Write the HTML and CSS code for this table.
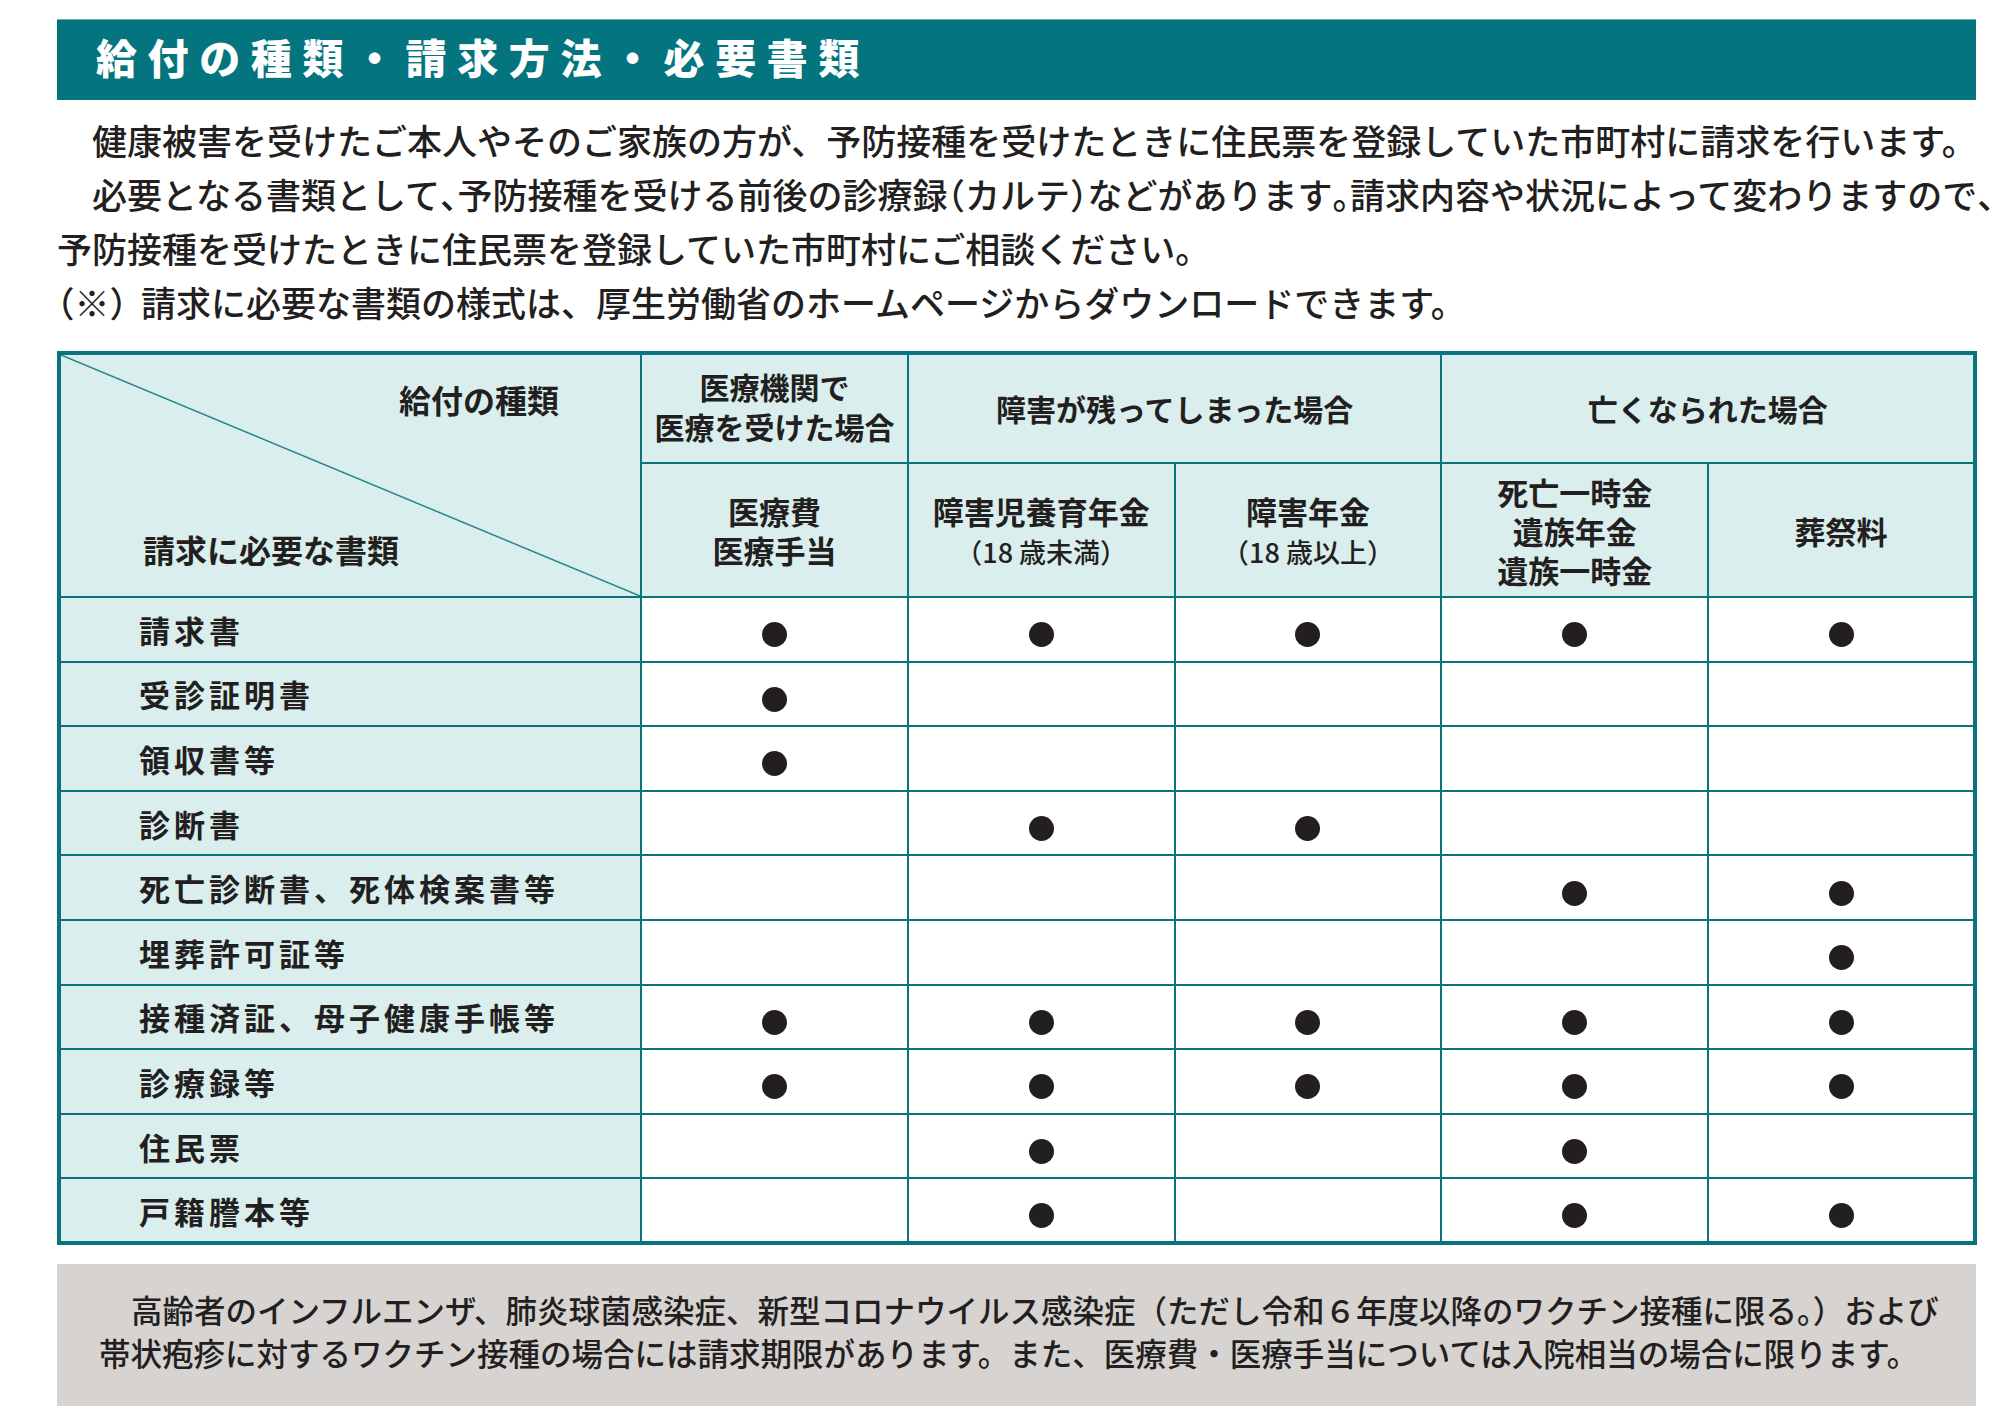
FILE: index.html
```html
<!DOCTYPE html>
<html lang="ja">
<head>
<meta charset="utf-8">
<title>給付の種類・請求方法・必要書類</title>
<link rel="stylesheet" href="styles.css">
</head>
<body>
<main class="page">
  <h1 class="title">給付の種類・請求方法・必要書類</h1>
  <div class="intro">
    <p class="ind">健康被害を受けたご本人やそのご家族の方が、予防接種を受けたときに住民票を登録していた市町村に請求を行います。</p>
    <p class="ind">必要となる書類として<span class="h">、</span>予防接種を受ける前後の診療録<span class="h">（</span>カルテ<span class="h">）</span>などがあります<span class="h">。</span>請求内容や状況によって変わりますので<span class="h">、</span><br>予防接種を受けたときに住民票を登録していた市町村にご相談ください。</p>
    <p><span class="h">（</span>※<span class="h">）</span><span class="gap"></span>請求に必要な書類の様式は、厚生労働省のホームページからダウンロードできます。</p>
  </div>

  <table class="grid">
    <colgroup>
      <col class="c-label">
      <col class="c-data"><col class="c-data"><col class="c-data"><col class="c-data"><col class="c-data">
    </colgroup>
    <thead>
      <tr class="hr1">
        <th class="corner" rowspan="2">
          <div class="corner-in">
            <span class="corner-top">給付の種類</span>
            <span class="corner-bottom">請求に必要な書類</span>
          </div>
        </th>
        <th class="two">医療機関で<br>医療を受けた場合</th>
        <th colspan="2">障害が残ってしまった場合</th>
        <th colspan="2">亡くなられた場合</th>
      </tr>
      <tr class="hr2">
        <th>医療費<br>医療手当</th>
        <th>障害児養育年金<br><span class="sub">（18 歳未満）</span></th>
        <th>障害年金<br><span class="sub">（18 歳以上）</span></th>
        <th>死亡一時金<br>遺族年金<br>遺族一時金</th>
        <th>葬祭料</th>
      </tr>
    </thead>
    <tbody>
      <tr><td class="label">請求書</td><td><i class="dot"></i></td><td><i class="dot"></i></td><td><i class="dot"></i></td><td><i class="dot"></i></td><td><i class="dot"></i></td></tr>
      <tr><td class="label">受診証明書</td><td><i class="dot"></i></td><td></td><td></td><td></td><td></td></tr>
      <tr><td class="label">領収書等</td><td><i class="dot"></i></td><td></td><td></td><td></td><td></td></tr>
      <tr><td class="label">診断書</td><td></td><td><i class="dot"></i></td><td><i class="dot"></i></td><td></td><td></td></tr>
      <tr><td class="label">死亡診断書、死体検案書等</td><td></td><td></td><td></td><td><i class="dot"></i></td><td><i class="dot"></i></td></tr>
      <tr><td class="label">埋葬許可証等</td><td></td><td></td><td></td><td></td><td><i class="dot"></i></td></tr>
      <tr><td class="label">接種済証、母子健康手帳等</td><td><i class="dot"></i></td><td><i class="dot"></i></td><td><i class="dot"></i></td><td><i class="dot"></i></td><td><i class="dot"></i></td></tr>
      <tr><td class="label">診療録等</td><td><i class="dot"></i></td><td><i class="dot"></i></td><td><i class="dot"></i></td><td><i class="dot"></i></td><td><i class="dot"></i></td></tr>
      <tr><td class="label">住民票</td><td></td><td><i class="dot"></i></td><td></td><td><i class="dot"></i></td><td></td></tr>
      <tr><td class="label">戸籍謄本等</td><td></td><td><i class="dot"></i></td><td></td><td><i class="dot"></i></td><td><i class="dot"></i></td></tr>
    </tbody>
  </table>

  <div class="note">
    <p class="ind">高齢者のインフルエンザ、肺炎球菌感染症、新型コロナウイルス感染症（ただし令和６年度以降のワクチン接種に限る。）および<br>帯状疱疹に対するワクチン接種の場合には請求期限があります。また、医療費・医療手当については入院相当の場合に限ります。</p>
  </div>
</main>
</body>
</html>
```

FILE: styles.css
```css
* { box-sizing: border-box; }
html, body { margin: 0; background: #fff; }
body {
  font-family: "Noto Sans CJK JP", "Noto Sans", sans-serif;
  color: #231f20;
}
.page {
  width: 2000px;
  padding: 19px 24px 0 57px;
}
.title {
  margin: 0;
  height: 81px;
  background: #04747e;
  border-top: 1px solid #6aaeb4;
  color: #fff;
  font-size: 41px;
  font-weight: 900;
  letter-spacing: 10.6px;
  line-height: 73px;
  padding-left: 39px;
  white-space: nowrap;
}
.intro {
  margin-top: 13px;
  font-size: 35px;
  line-height: 54px;
  font-weight: 500;
  white-space: nowrap;
}
.intro p { margin: 0; }
.ind { text-indent: 35px; }
.h { font-feature-settings: "halt"; }
.gap { display: inline-block; width: 14px; }

.grid {
  margin-top: 22px;
  width: 1916px;
  border-collapse: collapse;
  table-layout: fixed;
  border: 4px solid #0a737d;
}
.c-label { width: 582px; }
.c-data { width: 266.8px; }
.grid th, .grid td {
  border: 2px solid #0a737d;
  padding: 0;
}
.grid th {
  background: #d9eeed;
  font-size: 30px;
  font-weight: 700;
  line-height: 39px;
  text-align: center;
  vertical-align: middle;
}
.grid th.two { padding-bottom: 6px; line-height: 40px; }
.hr1 { height: 110px; }
.hr2 { height: 134px; }
.hr2 th { font-size: 31px; line-height: 39px; }
.sub {
  font-size: 27px;
  font-weight: 500;
  line-height: 30px;
}
.corner {
  background: linear-gradient(to top right, transparent calc(50% - 1.3px), #0a737d 50%, transparent calc(50% + 1.3px)) #d9eeed !important;
}
.corner-in {
  height: 240px;
  display: flex;
  flex-direction: column;
  justify-content: space-between;
  padding: 23px 81px 27px 82px;
  font-size: 32px;
  line-height: 40px;
  text-align: left;
}
.corner-top { align-self: flex-end; }
.corner-bottom { align-self: flex-start; }

.grid tbody tr { height: 64.6px; }
.grid td {
  text-align: center;
  vertical-align: middle;
  background: #fff;
}
.grid td.label {
  background: #d9eeed;
  text-align: left;
  padding-left: 78px;
  font-size: 31px;
  font-weight: 700;
  letter-spacing: 4px;
  white-space: nowrap;
}
.dot {
  display: inline-block;
  width: 25px;
  height: 25px;
  border-radius: 50%;
  background: #231f20;
  vertical-align: middle;
  margin-top: 11px;
}

.note {
  margin-top: 19px;
  height: 142px;
  background: #d6d3d1;
  padding: 24px 0 0 42px;
  font-size: 31.5px;
  line-height: 43px;
  font-weight: 500;
  white-space: nowrap;
}
.note p { margin: 0; }
.note .ind { text-indent: 32px; }
```
